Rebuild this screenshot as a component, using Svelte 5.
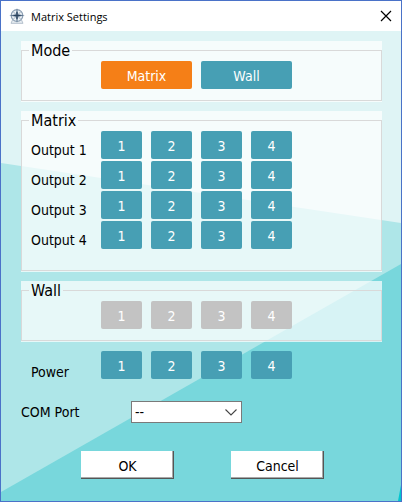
<script lang="ts">
  const channels = [1, 2, 3, 4];
  const outputs = [1, 2, 3, 4];

  let mode = $state("matrix");
  let port = $state("--");
</script>

<main class="window">
  <svg class="backdrop" viewBox="0 0 400 470" preserveAspectRatio="none" aria-hidden="true">
    <path d="M0 132 L400 192 V470 H0 Z" fill="#aee6e8" />
    <path d="M0 461 L400 233 V470 H0 Z" fill="#78d7dc" />
    <path d="M400 454 V470 H397 Z" fill="#00c5cf" />
  </svg>

  <header class="titlebar">
    <svg class="logo" width="16" height="16" viewBox="0 0 16 16" aria-hidden="true">
      <path d="M3.5 12 L2 15.3 H14 L12.5 12" fill="#e8edf2" stroke="#b4c0cc" />
      <circle cx="8" cy="7.5" r="5.8" fill="#eef2f6" stroke="#8c9fb3" stroke-width="1.2" />
      <path d="M4.5 4 L11.5 11 M11.5 4 L4.5 11" stroke="#a3b2c2" />
      <path d="M8 0 L9.2 6.3 L15.8 7.5 L9.2 8.7 L8 15 L6.8 8.7 L0.2 7.5 L6.8 6.3 Z" fill="#5d758f" />
      <path d="M8 4 V11 M4.5 7.5 H11.5" stroke="#2c435d" />
    </svg>
    <h1>Matrix Settings</h1>
    <button class="close" type="button" aria-label="Close">
      <svg width="12" height="12" viewBox="0 0 12 12">
        <path d="M1 1 L11 11 M11 1 L1 11" stroke="#000" stroke-width="1.2" />
      </svg>
    </button>
  </header>

  <form class="body" onsubmit={(event) => event.preventDefault()}>
    <div class="group">
      <fieldset>
        <legend>Mode</legend>
        <div class="row">
          <span class="label"></span>
          <button
            class="tile wide"
            class:active={mode === "matrix"}
            type="button"
            onclick={() => (mode = "matrix")}>Matrix</button>
          <button
            class="tile wide"
            class:active={mode === "wall"}
            type="button"
            onclick={() => (mode = "wall")}>Wall</button>
        </div>
      </fieldset>
    </div>

    <div class="group">
      <fieldset class="tall">
        <legend>Matrix</legend>
        {#each outputs as output}
          <div class="row" role="group" aria-labelledby="output-{output}">
            <span class="label" id="output-{output}">Output {output}</span>
            {#each channels as channel}
              <button class="tile" type="button" disabled={mode !== "matrix"}>{channel}</button>
            {/each}
          </div>
        {/each}
      </fieldset>
    </div>

    <div class="group">
      <fieldset>
        <legend>Wall</legend>
        <div class="row">
          <span class="label"></span>
          {#each channels as channel}
            <button class="tile" type="button" disabled={mode !== "wall"}>{channel}</button>
          {/each}
        </div>
      </fieldset>
    </div>

    <div class="row power" role="group" aria-labelledby="power">
      <span class="label" id="power">Power</span>
      {#each channels as channel}
        <button class="tile" type="button">{channel}</button>
      {/each}
    </div>

    <div class="port">
      <label for="port">COM Port</label>
      <div class="select">
        <select id="port" bind:value={port}>
          <option>--</option>
          <option>COM1</option>
          <option>COM2</option>
        </select>
        <svg class="arrow" width="12" height="7" viewBox="0 0 12 7" aria-hidden="true">
          <path d="M0.5 0.5 L6 6 L11.5 0.5" fill="none" stroke="#444" stroke-width="1.1" />
        </svg>
      </div>
    </div>

    <footer class="actions">
      <button class="push" type="submit">OK</button>
      <button class="push" type="button">Cancel</button>
    </footer>
  </form>
</main>

<style>
  :global(body) {
    margin: 0;
  }

  .window {
    position: relative;
    display: flex;
    flex-direction: column;
    box-sizing: border-box;
    min-height: 100vh;
    border: 1px solid #4a72c8;
    background: #dff4f5;
    color: #000;
    font-family: "DejaVu Sans Condensed", "DejaVu Sans", sans-serif;
    font-size: 14px;
  }

  .backdrop {
    position: absolute;
    top: 30px;
    left: 0;
    width: 100%;
    height: calc(100% - 30px);
  }

  .titlebar {
    position: relative;
    display: flex;
    align-items: center;
    height: 30px;
    padding: 0 9px 0 8px;
    background: #fff;
  }

  h1 {
    flex: 1;
    margin: 0 0 0 6px;
    font: 11px "Open Sans", "Noto Sans", sans-serif;
  }

  button {
    padding: 0;
    border: 0;
    font: inherit;
  }

  .close {
    display: flex;
    background: none;
  }

  .body {
    position: relative;
    display: flex;
    flex-direction: column;
    gap: 9px;
    padding: 10px 19px 20px 20px;
  }

  .group {
    padding-bottom: 1px;
    background: rgba(255, 255, 255, 0.7);
  }

  fieldset {
    display: flex;
    flex-direction: column;
    gap: 2px;
    min-width: 0;
    margin: 0;
    padding: 1px 7px 11px;
    border: 1px solid #d9d9d9;
  }

  .tall {
    padding-bottom: 21px;
  }

  legend {
    padding: 1px 2px 0;
    font-size: 16px;
    line-height: 18px;
  }

  .row {
    display: flex;
    gap: 9px;
    padding-left: 2px;
  }

  .label {
    width: 61px;
    padding-top: 10px;
    line-height: 18px;
    white-space: nowrap;
  }

  .tile {
    width: 41px;
    height: 28px;
    padding-top: 2px;
    border-radius: 2px;
    background: #479fb4;
    color: #fff;
  }

  .wide {
    width: 91px;
  }

  .active {
    background: #f57f17;
  }

  .tile:disabled {
    background: #c3c3c3;
  }

  .power {
    padding-left: 10px;
  }

  .power .label {
    height: 18px;
    margin-bottom: -2px;
    padding-top: 12px;
  }

  .port {
    display: flex;
    align-items: center;
    margin-top: 13px;
  }

  .port label {
    width: 110px;
  }

  .select {
    position: relative;
    width: 111px;
  }

  select {
    display: block;
    width: 100%;
    height: 22px;
    padding: 0 3px;
    border: 1px solid #7a7a7a;
    border-radius: 0;
    appearance: none;
    background: #fff;
    color: #000;
    font: inherit;
  }

  .arrow {
    position: absolute;
    top: 8px;
    right: 5px;
    pointer-events: none;
  }

  .actions {
    display: flex;
    gap: 57px;
    margin-top: 19px;
    padding-left: 60px;
  }

  .push {
    width: 93px;
    height: 28px;
    padding-top: 1px;
    background: #fff;
    box-shadow: inset -1px -1px #555, inset -2px -2px #a8a8a8;
    color: #000;
  }
</style>
